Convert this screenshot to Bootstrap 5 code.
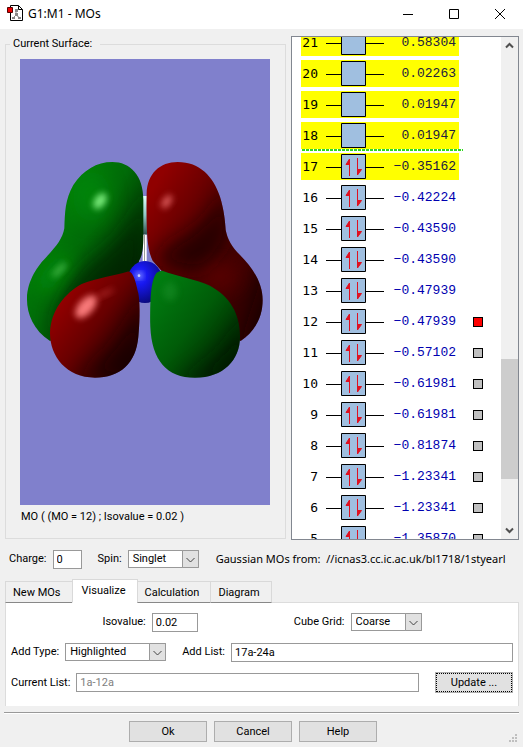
<!DOCTYPE html>
<html lang="en">
<head>
<meta charset="utf-8">
<meta name="viewport" content="width=device-width, initial-scale=1">
<title>G1:M1 - MOs</title>
<link href="https://cdn.jsdelivr.net/npm/bootstrap@5.3.0/dist/css/bootstrap.min.css" rel="stylesheet">
<style>
body{background:#f0f0f0;color:#000;font:11px/16px "Roboto","Liberation Sans",sans-serif;min-height:100vh}
.titlebar{height:29px;background:#fff;font:12px/16px "Noto Sans",sans-serif;padding:0 0 2px 7px}
.titlebar button{width:46px;height:27px;border:0;background:none;padding:0}
.titlebar button svg{display:block;margin:auto}
.workarea{padding:7px 4px 0 5px;gap:5px}
.surface-group{border:1px solid #dcdcdc;margin:0 0 1px;padding:0 15px 12px 14px}
.surface-group legend{font-size:11px;line-height:16px;width:auto;float:none;margin:0 0 7px -10px;padding:0 8px 0 3px;background:#f0f0f0}
.surface-view{background:#8080cc;height:446px}
.surface-view svg{width:250px;height:446px;display:block;margin:auto}
.surface-caption{margin-top:4px;padding-left:1px}
.orbitals{width:228px;height:504px;background:#fff;border:1px solid #828790}
.orbital-list{list-style:none;margin:-12px 0 0;padding:0 0 0 9px}
.orbital{height:31px}
.level{width:158px;height:27px;padding-left:1px}
.virtual{background:#ff0}
.num{width:16px;text-align:right;font:13px/26px "DejaVu Sans Mono",monospace}
.energy{flex:1;text-align:right;padding-right:3px;color:#0000b0;font:13px/26px "Liberation Mono",monospace}
.virtual .energy{color:#202040}
.marker{width:10px;height:10px;border:1px solid #000;background:#c0c0c0;margin-left:14px}
.marker.on{background:#f00}
.gap-line{height:2px;margin:0 38px 0 1px;background:repeating-linear-gradient(90deg,#30d820 0 3px,transparent 3px 4px)}
.track{width:17px;background:#f0f0f0;padding:5px 0}
.thumb{height:120px;background:#cdcdcd;margin-top:auto;margin-bottom:48px}
.field{height:19px;border:1px solid #999;border-radius:0;background:#fff;padding:0 3px;color:#000;font:inherit;min-width:0}
.field:disabled{color:#808080}
.pick{height:18px}
.pick select{appearance:none;width:100%;height:18px;border:1px solid #999;border-radius:0;background:#fff;padding:0 4px 1px;font:inherit;line-height:15px;color:#000;display:block}
.pick svg{right:0;top:0;pointer-events:none}
.w-charge{width:29px}.w-spin{width:71px}.w-type{width:101px}.w-iso{width:46px}
label{margin-right:6px}
.state-row{padding:10px 9px 0;height:39px;align-items:flex-start}
.state-row label,.source{line-height:18px}
.source{font:11px/18px "Noto Sans",sans-serif;margin-left:17px;white-space:pre}
.sheets{padding:0 4px 0 5px;border:0;height:24px;align-items:flex-end}
.sheets .nav-link{border:1px solid #d9d9d9;border-bottom-color:#888;border-radius:0;color:#000;background:#f0f0f0;padding:2px 11px 2px 7px;height:22px;line-height:17px;margin:0 0 0 -1px}
.sheets .nav-item:first-child .nav-link{margin-left:0}
.sheets .nav-link.active{background:#fff;border-color:#d9d9d9 #d9d9d9 #fff;height:24px;padding:2px 11px 2px 9px}
.sheet{margin:-1px 4px 0 5px;background:#fff;border:1px solid #dcdcdc;border-bottom:0;padding:10px 5px 13px;gap:11px;height:104px}
.sheet .sheet-row{height:19px;line-height:18px}
.parameters{gap:96px}
.push{border:1px solid #adadad;background:#e1e1e1;width:78px;height:21px;padding:0;border-radius:0;font:inherit;line-height:18px;color:#000}
.push.current{outline:1px dotted #000;outline-offset:-2px}
.actions{border-top:1px solid #999;box-shadow:inset 0 1px #fff;margin:6px 4px 0;padding:8px 17px 5px 0;gap:7px;position:relative}
.grip{right:2px;bottom:5px}
</style>
<script src="https://cdn.jsdelivr.net/npm/bootstrap@5.3.0/dist/js/bootstrap.bundle.min.js"></script>
</head>
<body class="d-flex flex-column">
<header class="titlebar d-flex align-items-center">
<svg width="17" height="17" viewBox="0 0 17 17" class="me-1" aria-hidden="true"><path d="M3.500.5h8l4 4v11h-12z" fill="#fff" stroke="#000"/><path d="M11.500.5v4h4" fill="none" stroke="#000"/><path d="M9 5v5l-3 3M9 10l4 3" stroke="#888" fill="none"/><path d="M8 4h3v3H8zM8 8h3v3H8zM5 12h3v2H5zM11 12h3v2h-3z" fill="#888"/><path d="M.5 2.500h5v5h-5z" fill="#e00" stroke="#500"/></svg>
<span class="me-auto">G1:M1 - MOs</span>
<button aria-label="Minimize"><svg width="10" height="10"><path d="M0 5.500h10" stroke="#000"/></svg></button>
<button aria-label="Maximize"><svg width="10" height="10"><path d="M.5.5h9v9h-9z" stroke="#000" fill="none"/></svg></button>
<button aria-label="Close"><svg width="10" height="10"><path d="M0 0l10 10M10 0L0 10" stroke="#000"/></svg></button>
</header>
<main>
<div class="workarea d-flex">
<fieldset class="surface-group flex-grow-1">
<legend>Current Surface:</legend>
<div class="surface-view">
<svg viewBox="30 -243 750 1338" role="img" aria-label="Molecular orbital surface">
<defs>
<filter id="soft" x="-60%" y="-60%" width="220%" height="220%"><feGaussianBlur stdDeviation="28"/></filter>
<filter id="glow" x="-60%" y="-60%" width="220%" height="220%"><feGaussianBlur stdDeviation="10"/></filter>
<linearGradient id="g1" x1=".15" y1=".1" x2=".85" y2=".75"><stop offset="0" stop-color="#008a08"/><stop offset=".5" stop-color="#006b08"/><stop offset="1" stop-color="#002800"/></linearGradient>
<linearGradient id="r1" x1=".1" y1=".1" x2=".8" y2=".8"><stop offset="0" stop-color="#900000"/><stop offset=".45" stop-color="#580000"/><stop offset="1" stop-color="#380000"/></linearGradient>
<linearGradient id="r2" x1=".15" y1=".15" x2=".9" y2=".8"><stop offset="0" stop-color="#980000"/><stop offset=".5" stop-color="#680000"/><stop offset="1" stop-color="#240000"/></linearGradient>
<linearGradient id="g2" x1=".1" y1=".1" x2=".9" y2=".85"><stop offset="0" stop-color="#007c10"/><stop offset=".5" stop-color="#005c08"/><stop offset="1" stop-color="#002400"/></linearGradient>
<radialGradient id="b1" cx=".35" cy=".35" r=".7"><stop offset="0" stop-color="#3038ff"/><stop offset=".3" stop-color="#1818f0"/><stop offset="1" stop-color="#080878"/></radialGradient>
<linearGradient id="atom" x1="0" y1="0" x2="0" y2="1"><stop offset="0" stop-color="#e0ffff"/><stop offset=".5" stop-color="#90c8c8"/><stop offset="1" stop-color="#305050"/></linearGradient>
<path id="pa" d="M307 66C360 66 400 105 400 180V290C400 330 395 350 387 362L370 500 120 603C70 570 50 520 51 475C52 420 85 375 110 350C140 318 158 295 163 265C165 215 165 180 190 135C220 90 260 66 307 66Z"/>
<path id="pb" d="M503 66C570 66 610 110 630 170C642 210 645 240 647 270C653 300 665 320 690 345C730 385 758 430 758 480C758 530 735 575 692 603L470 480 457 395 428 362C412 330 408 280 410 160C412 100 450 66 503 66Z"/>
<path id="pc" d="M352 395C370 390 378 430 385 460C392 500 388 560 385 590C378 670 330 713 255 713C170 713 120 650 120 580C122 510 165 460 215 432C265 412 310 408 352 395Z"/>
<path id="pd" d="M457 392C500 408 560 418 600 437C660 470 690 520 690 590C690 660 640 713 555 713C470 713 425 660 421 560C420 480 422 420 440 398Q448 392 457 392Z"/>
<clipPath id="ca"><use href="#pa"/></clipPath><clipPath id="cb"><use href="#pb"/></clipPath><clipPath id="cc"><use href="#pc"/></clipPath><clipPath id="cd"><use href="#pd"/></clipPath>
</defs>
<path d="M397 168h14v116h-14z" fill="url(#atom)"/>
<path d="M398 284h12v80h-12z" fill="#fff"/><path d="M402 284h3v80h-3z" fill="#999"/>
<use href="#pa" fill="url(#g1)"/>
<g clip-path="url(#ca)"><path d="M420 100Q385 260 270 345T130 570L380 500Z" fill="#001c00" opacity=".65" filter="url(#soft)"/><ellipse cx="245" cy="170" rx="55" ry="75" fill="#009610" opacity=".45" filter="url(#soft)"/><ellipse cx="130" cy="400" rx="28" ry="70" transform="rotate(38 130 400)" fill="#009610" opacity=".7" filter="url(#soft)"/><ellipse cx="270" cy="183" rx="16" ry="27" transform="rotate(35 270 183)" fill="#90ff90" opacity=".85" filter="url(#glow)"/><ellipse cx="148" cy="390" rx="10" ry="30" transform="rotate(45 148 390)" fill="#50c050" opacity=".75" filter="url(#glow)"/></g>
<use href="#pb" fill="url(#r1)"/>
<g clip-path="url(#cb)"><path d="M650 130Q610 240 520 290T440 370L570 400Q650 340 660 260Z" fill="#180000" opacity=".7" filter="url(#soft)"/><ellipse cx="630" cy="410" rx="55" ry="40" fill="#680000" opacity=".6" filter="url(#soft)"/><path d="M770 370Q720 510 690 620H800V370Z" fill="#100000" opacity=".7" filter="url(#soft)"/><ellipse cx="470" cy="185" rx="12" ry="23" transform="rotate(35 470 185)" fill="#f07070" opacity=".8" filter="url(#glow)"/></g>
<ellipse cx="405" cy="426" rx="54" ry="63" fill="url(#b1)"/><ellipse cx="387" cy="407" rx="9" ry="7" fill="#c0c8ff" filter="url(#glow)"/><ellipse cx="387" cy="407" rx="4" ry="4" fill="#c8d0ff"/>
<use href="#pc" fill="url(#r2)"/>
<g clip-path="url(#cc)"><path d="M400 440Q350 610 200 715H400Z" fill="#180000" opacity=".65" filter="url(#soft)"/><ellipse cx="228" cy="500" rx="22" ry="42" transform="rotate(42 228 500)" fill="#ff8080" opacity=".95" filter="url(#glow)"/><ellipse cx="285" cy="460" rx="8" ry="30" transform="rotate(65 285 460)" fill="#d04040" opacity=".5" filter="url(#glow)"/></g>
<use href="#pd" fill="url(#g2)"/>
<g clip-path="url(#cd)"><path d="M710 500Q660 650 500 725H710Z" fill="#001800" opacity=".65" filter="url(#soft)"/><ellipse cx="480" cy="455" rx="22" ry="28" fill="#209830" opacity=".4" filter="url(#glow)"/></g>
</svg>
</div>
<div class="surface-caption">MO ( (MO = 12) ; Isovalue = 0.02 )</div>
</fieldset>
<section class="orbitals d-flex overflow-hidden flex-shrink-0" aria-label="Orbitals">
<ul class="orbital-list flex-grow-1" id="orbitalList"></ul>
<div class="track d-flex flex-column align-items-center">
<svg width="9" height="7" aria-hidden="true"><path d="M1 5.500l3.500-3.500L8 5.500" fill="none" stroke="#505050" stroke-width="2"/></svg>
<div class="thumb w-100"></div>
<svg width="9" height="7" aria-hidden="true"><path d="M1 1.500L4.500 5 8 1.500" fill="none" stroke="#505050" stroke-width="2"/></svg>
</div>
</section>
</div>
<div class="state-row d-flex">
<label for="charge">Charge:</label><input id="charge" class="field w-charge me-3" value="0">
<label for="spin">Spin:</label>
<span class="pick w-spin position-relative flex-shrink-0"><select id="spin"><option>Singlet</option></select><svg class="position-absolute" width="17" height="18"><path d="M.5.5h16v17H.5z" fill="#e1e1e1" stroke="#999"/><path d="M4.500 8l4 4 4-4" fill="none" stroke="#444"/></svg></span>
<span class="source">Gaussian MOs from:  //icnas3.cc.ic.ac.uk/bl1718/1styearl</span>
</div>
<ul class="nav nav-tabs sheets">
<li class="nav-item"><a class="nav-link" href="#">New MOs</a></li>
<li class="nav-item"><a class="nav-link active" href="#" aria-current="page">Visualize</a></li>
<li class="nav-item"><a class="nav-link" href="#">Calculation</a></li>
<li class="nav-item"><a class="nav-link" href="#">Diagram</a></li>
</ul>
<div class="sheet d-flex flex-column">
<div class="sheet-row parameters d-flex justify-content-center">
<div class="d-flex"><label for="iso">Isovalue:</label><input id="iso" class="field w-iso" value="0.02"></div>
<div class="d-flex"><label for="grid">Cube Grid:</label><span class="pick w-spin position-relative"><select id="grid"><option>Coarse</option></select><svg class="position-absolute" width="17" height="18"><path d="M.5.5h16v17H.5z" fill="#e1e1e1" stroke="#999"/><path d="M4.500 8l4 4 4-4" fill="none" stroke="#444"/></svg></span></div>
</div>
<div class="sheet-row d-flex">
<label for="type">Add Type:</label><span class="pick w-type position-relative me-3"><select id="type"><option>Highlighted</option></select><svg class="position-absolute" width="17" height="18"><path d="M.5.5h16v17H.5z" fill="#e1e1e1" stroke="#999"/><path d="M4.500 8l4 4 4-4" fill="none" stroke="#444"/></svg></span>
<label for="add">Add List:</label><input id="add" class="field flex-grow-1" value="17a-24a">
</div>
<div class="sheet-row d-flex align-items-center">
<label for="current">Current List:</label><input id="current" class="field flex-grow-1 me-3" value="1a-12a" disabled><button class="push current">Update ...</button>
</div>
</div>
<footer class="actions d-flex justify-content-center">
<button class="push">Ok</button><button class="push">Cancel</button><button class="push">Help</button>
<svg class="grip position-absolute" width="8" height="8" aria-hidden="true"><path d="M6 0h2v2H6zM3 3h2v2H3zM6 3h2v2H6zM0 6h2v2H0zM3 6h2v2H3zM6 6h2v2H6z" fill="#bfbfbf"/></svg>
</footer>
</main>
<script>
const energies=[[21,'0.58304'],[20,'0.02263'],[19,'0.01947'],[18,'0.01947'],[17,'−0.35162'],[16,'−0.42224'],[15,'−0.43590'],[14,'−0.43590'],[13,'−0.47939'],[12,'−0.47939'],[11,'−0.57102'],[10,'−0.61981'],[9,'−0.61981'],[8,'−0.81874'],[7,'−1.23341'],[6,'−1.23341'],[5,'−1.35870']];
const arrows='<path d="M23.500 22V5L20 10.500h3.500M31.500 4v17l4-5.500h-4" fill="#e01020" stroke="#e01020"/>';
document.getElementById('orbitalList').innerHTML=energies.map(([n,e])=>`<li class="orbital"><div class="d-flex align-items-center pt-1"><div class="level d-flex align-items-center ${n>16?'virtual':''}"><span class="num">${n}</span><svg width="58" height="25" viewBox="0 0 58 25" class="ms-2"><path d="M0 13.500h58" stroke="#000"/><path d="M15.500.5h24v24h-24z" fill="#a0bfe0" stroke="#000"/>${n<18?arrows:''}</svg><span class="energy">${e}</span></div>${n<13?`<span class="marker ${n===12?'on':''}"></span>`:''}</div>${n===18?'<div class="gap-line"></div>':''}</li>`).join('');
</script>
</body>
</html>
